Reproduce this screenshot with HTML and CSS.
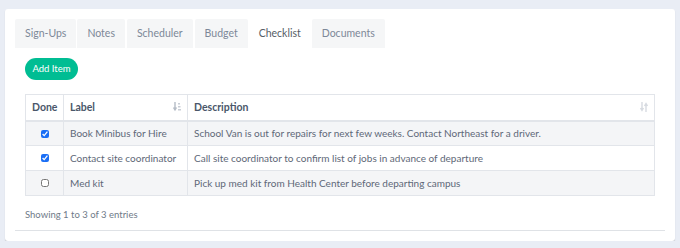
FILE: index.html
```html
<!DOCTYPE html>
<html lang="en">
<head>
  <meta charset="utf-8">
  <title>Checklist</title>
  <link rel="stylesheet" href="styles.css">
</head>
<body>

  <div class="card">
    <ul class="tabs">
      <li>Sign-Ups</li>
      <li>Notes</li>
      <li>Scheduler</li>
      <li>Budget</li>
      <li class="active">Checklist</li>
      <li>Documents</li>
    </ul>

    <div class="panel">
      <button class="btn-add">Add Item</button>

      <table class="grid">
        <thead>
          <tr>
            <th class="col-done">Done</th>
            <th class="col-label">
              <span>Label</span>
              <svg class="sort" width="8" height="10" viewBox="0 0 8 10">
                <path d="M2 0v7M0.5 5.5 2 8 3.5 5.5" stroke="#b5bcc6" stroke-width="1.4" fill="none"/>
                <rect x="5" y="1" width="2" height="1.5" fill="#c9ced6"/>
                <rect x="5" y="4" width="2.5" height="1.5" fill="#c9ced6"/>
                <rect x="5" y="7" width="3" height="1.5" fill="#c9ced6"/>
              </svg>
            </th>
            <th class="col-desc">
              <span>Description</span>
              <svg class="sort" width="8" height="10" viewBox="0 0 8 10">
                <path d="M2 0v8M0.5 6 2 8.5 3.5 6M6 10V2M4.5 4 6 1.5 7.5 4" stroke="#d7dbe1" stroke-width="1.4" fill="none"/>
              </svg>
            </th>
          </tr>
        </thead>
        <tbody>
          <tr>
            <td class="col-done"><input type="checkbox" checked></td>
            <td>Book Minibus for Hire</td>
            <td>School Van is out for repairs for next few weeks. Contact Northeast for a driver.</td>
          </tr>
          <tr>
            <td class="col-done"><input type="checkbox" checked></td>
            <td>Contact site coordinator</td>
            <td>Call site coordinator to confirm list of jobs in advance of departure</td>
          </tr>
          <tr>
            <td class="col-done"><input type="checkbox"></td>
            <td>Med kit</td>
            <td>Pick up med kit from Health Center before departing campus</td>
          </tr>
        </tbody>
      </table>

      <p class="info">Showing 1 to 3 of 3 entries</p>
    </div>
  </div>

</body>
</html>
```

FILE: styles.css
```css
*, *::before, *::after { box-sizing: border-box }

body {
  font: 10.5px/1.25 Lato, "Noto Sans", sans-serif;
  margin: 0;
  padding: 9px 5px 0;
  background: #e9edf5;
  color: #5e6877;
  --border: #e2e5ea;
  --stripe: #f4f5f7;
  --green: #00bd93;
}

.card {
  width: 670px;
  height: 232px;
  background: #fff;
  border-radius: 3px;
  box-shadow: 0 1px 1px rgba(0, 0, 0, 0.18);
  padding: 10px 10px 0;
}


/*///////////// Tabs */

.tabs {
  display: flex;
  gap: 1px;
  list-style: none;
  margin: 0;
  padding: 0;
}

.tabs li {
  height: 29px;
  line-height: 29px;
  padding: 0 10px;
  background: #f5f6f7;
  color: #7d8898;
  border-radius: 2px 2px 0 0;
}

.tabs li:nth-child(3),
.tabs li:nth-child(4) { margin-left: 1px; }

.tabs li.active {
  background: #fff;
  color: #555d66;
}


/*///////////// Panel */

.panel {
  height: 183px;
  padding: 10px 10px 0;
  border-bottom: 1px solid #dfe2e6;
}

.btn-add {
  font: inherit;
  font-size: 9.5px;
  height: 22px;
  width: 53px;
  padding: 0;
  border: none;
  border-radius: 11px;
  background: var(--green);
  color: #fff;
  display: block;
  margin-bottom: 14px;
}


/*///////////// Table */

.grid {
  width: 630px;
  table-layout: fixed;
  border-collapse: collapse;
  border: 1px solid var(--border);
}

.grid th,
.grid td {
  border: 1px solid var(--border);
  padding: 0 6px;
  text-align: left;
  white-space: nowrap;
}

.grid th {
  height: 26px;
  font-weight: 700;
  color: #4a576a;
  border-bottom: 2px solid var(--border);
}

.grid td {
  height: 25px;
  font-size: 10px;
}

.grid tbody tr:nth-child(odd) td {
  background: var(--stripe);
}

.grid .col-done {
  width: 38px;
  text-align: center;
}

.grid .col-label {
  width: 124px;
}

.grid th .sort {
  float: right;
  margin-top: 1px;
}

.grid input {
  width: 8px;
  height: 8px;
  margin: 3px 0 0 0;
  accent-color: #1a6ef5;
}

.info {
  margin: 13px 0 0;
  font-size: 9.5px;
  color: #6f7a88;
}
```
